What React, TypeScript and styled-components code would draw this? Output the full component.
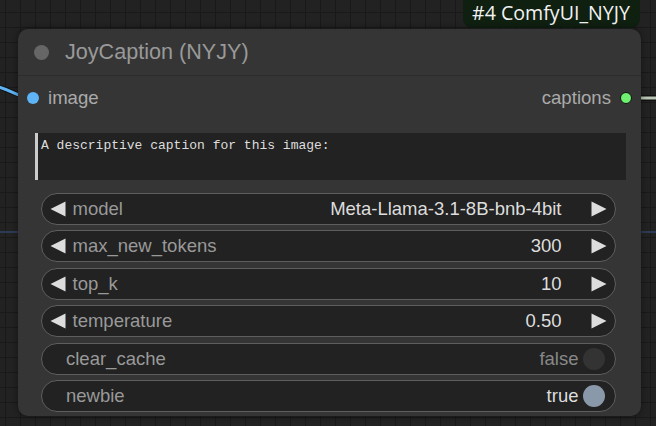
import React from "react";
import styled, { createGlobalStyle } from "styled-components";

const Global = createGlobalStyle`
  html, body { margin: 0; padding: 0; background: #1f1f1f; }
  body { width: 656px; height: 426px; overflow: hidden; font-family: "Liberation Sans", Arial, sans-serif; }
`;

const Canvas = styled.div`
  position: relative;
  width: 656px;
  height: 426px;
  overflow: hidden;
  background-color: #222222;
  background-image:
    linear-gradient(to bottom, transparent 231px, #2b3a55 231px, #2b3a55 233px, transparent 233px),
    linear-gradient(to right, #191919 1px, transparent 1px),
    linear-gradient(to bottom, #191919 1px, transparent 1px);
  background-size: 100% 100%, 15px 15px, 15px 15px;
  background-position: 0 0, 5px 0, 0 12px;
`;

const Wires = styled.svg`
  position: absolute;
  left: 0;
  top: 0;
  width: 656px;
  height: 426px;
`;

const Badge = styled.div`
  position: absolute;
  left: 463px;
  top: -8px;
  width: 177px;
  height: 36px;
  padding: 8px 0 0 9px;
  box-sizing: border-box;
  border-radius: 9px;
  background: #0f1f10;
  color: #f2f2f2;
  font-family: "Open Sans", "Noto Sans", sans-serif;
  font-size: 19.6px;
  line-height: 26px;
  white-space: nowrap;
`;

const Node = styled.div`
  position: absolute;
  left: 18px;
  top: 29px;
  width: 623px;
  height: 387px;
  background: #353535;
  border-radius: 10px;
  box-shadow: 0 0 6px rgba(0, 0, 0, 0.45);
  display: flex;
  flex-direction: column;
`;

const Title = styled.div`
  height: 46px;
  display: flex;
  align-items: center;
  gap: 16px;
  padding-left: 16px;
  border-bottom: 1px solid #2c2c2c;
`;

const TitleDot = styled.div`
  width: 15px;
  height: 15px;
  border-radius: 50%;
  background: #666666;
`;

const TitleText = styled.div`
  color: #999999;
  font-size: 21.6px;
`;

const Slots = styled.div`
  height: 44px;
  display: flex;
  align-items: center;
  justify-content: space-between;
  padding: 0 9px 0 9px;
`;

const Slot = styled.div`
  display: flex;
  align-items: center;
  gap: 9px;
  color: #aaaaaa;
  font-size: 18.6px;
`;

const SlotDot = styled.div<{ $color: string; $ring?: boolean }>`
  width: 12px;
  height: 12px;
  border-radius: 50%;
  background: ${(p) => p.$color};
  box-sizing: border-box;
  border: ${(p) => (p.$ring ? "1.5px solid #111" : "none")};
`;

const TextArea = styled.div`
  margin: 13px 15px 0 17px;
  height: 47px;
  background: #222222;
  border-left: 3px solid #cccccc;
  box-sizing: border-box;
  padding: 5px 3px;
  color: #dddddd;
  font-family: "Liberation Mono", "Courier New", monospace;
  font-size: 13px;
  line-height: 16px;
`;

const Widgets = styled.div`
  margin: 13px 25px 0 23px;
  display: flex;
  flex-direction: column;
  gap: 5.4px;
`;

const Pill = styled.div`
  height: 32px;
  box-sizing: border-box;
  border: 1.5px solid #5e5e5e;
  border-radius: 16px;
  background: #222222;
  display: flex;
  align-items: center;
  font-size: 18.5px;
  color: #999999;
  padding: 0 8.5px 0 7.5px;
`;

const Arrow = styled.span`
  width: 16px;
  height: 16px;
  display: inline-flex;
`;

const Label = styled.span<{ $indent?: boolean }>`
  margin-left: ${(p) => (p.$indent ? "16.5px" : "7px")};
  flex: 1;
`;

const Value = styled.span`
  color: #dddddd;
  margin-right: 29px;
`;

const ToggleValue = styled.span<{ $on: boolean }>`
  color: ${(p) => (p.$on ? "#dddddd" : "#888888")};
  margin-right: 4px;
`;

const Knob = styled.div<{ $on: boolean }>`
  width: 22px;
  height: 22px;
  border-radius: 50%;
  background: ${(p) => (p.$on ? "#8999aa" : "#333333")};
  margin-right: 2px;
`;

const Tri = ({ dir }: { dir: "l" | "r" }) => (
  <Arrow>
    <svg width="16" height="16" viewBox="0 0 16 16">
      {dir === "l" ? (
        <polygon points="15.5,0.5 15.5,15.5 0.5,8" fill="#dddddd" />
      ) : (
        <polygon points="0.5,0.5 0.5,15.5 15.5,8" fill="#dddddd" />
      )}
    </svg>
  </Arrow>
);

const combos = [
  { name: "model", value: "Meta-Llama-3.1-8B-bnb-4bit" },
  { name: "max_new_tokens", value: "300" },
  { name: "top_k", value: "10" },
  { name: "temperature", value: "0.50" },
];

const toggles = [
  { name: "clear_cache", on: false },
  { name: "newbie", on: true },
];

export default function App() {
  return (
    <>
      <Global />
      <Canvas>
        <Wires viewBox="0 0 656 426">
          <path d="M -5 86 C 12 90, 20 98, 33 99" stroke="#111" strokeWidth="5" fill="none" />
          <path d="M -5 86 C 12 90, 20 98, 33 99" stroke="#5eb4f4" strokeWidth="3" fill="none" />
          <path d="M 626 98 L 660 98" stroke="#111" strokeWidth="6" fill="none" />
          <path d="M 626 98 L 660 98" stroke="#b9c6b6" strokeWidth="3" fill="none" />
        </Wires>
        <Badge>#4 ComfyUI_NYJY</Badge>
        <Node>
          <Title>
            <TitleDot />
            <TitleText>JoyCaption (NYJY)</TitleText>
          </Title>
          <Slots>
            <Slot>
              <SlotDot $color="#5eb4f4" />
              image
            </Slot>
            <Slot>
              captions
              <SlotDot $color="#70f070" $ring />
            </Slot>
          </Slots>
          <TextArea>A descriptive caption for this image:</TextArea>
          <Widgets>
            {combos.map((c) => (
              <Pill key={c.name}>
                <Tri dir="l" />
                <Label>{c.name}</Label>
                <Value>{c.value}</Value>
                <Tri dir="r" />
              </Pill>
            ))}
            {toggles.map((t) => (
              <Pill key={t.name}>
                <Label $indent>{t.name}</Label>
                <ToggleValue $on={t.on}>{t.on ? "true" : "false"}</ToggleValue>
                <Knob $on={t.on} />
              </Pill>
            ))}
          </Widgets>
        </Node>
      </Canvas>
    </>
  );
}
